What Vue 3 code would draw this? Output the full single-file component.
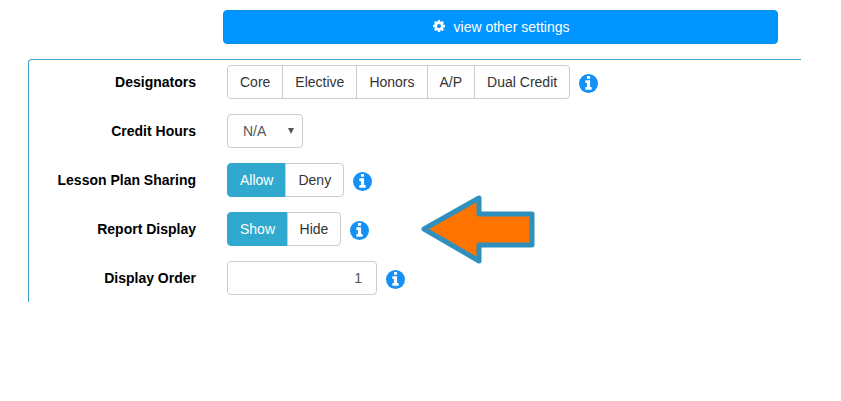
<script setup>
const infoGlyph = 'M1152 1376v-160q0-14-9-23t-23-9h-96v-512q0-14-9-23t-23-9h-320q-14 0-23 9t-9 23v160q0 14 9 23t23 9h96v320h-96q-14 0-23 9t-9 23v160q0 14 9 23t23 9h448q14 0 23-9t9-23zm-128-896v-160q0-14-9-23t-23-9h-192q-14 0-23 9t-9 23v160q0 14 9 23t23 9h192q14 0 23-9t9-23z'
const gearPath = 'M1152 896q0-106-75-181t-181-75-181 75-75 181 75 181 181 75 181-75 75-181zm512-109v222q0 12-8 23t-20 13l-185 28q-19 54-39 91 35 50 107 138 10 12 10 25t-9 23q-27 37-99 108t-94 71q-12 0-26-9l-138-108q-44 23-91 38-16 136-29 186-7 28-36 28h-222q-14 0-24.500-8.500t-11.500-21.500l-28-184q-49-16-90-37l-141 107q-10 9-25 9-14 0-25-11-126-114-165-168-7-10-7-23 0-12 8-23 15-21 51-66.500t54-70.500q-27-50-41-99l-183-27q-13-2-21-12.500t-8-23.500v-222q0-12 8-23t19-13l186-28q14-46 39-92-40-57-107-138-10-12-10-24 0-10 9-23 26-36 98.500-107.500t94.500-71.500q13 0 26 10l138 107q44-23 91-38 16-136 29-186 7-28 36-28h222q14 0 24.500 8.500t11.500 21.500l28 184q49 16 90 37l142-107q9-9 24-9 13 0 25 10 129 119 165 170 7 8 7 22 0 12-8 23-15 21-51 66.500t-54 70.500q26 50 41 98l183 28q13 2 21 12.500t8 23.500z'

const designators = ['Core', 'Elective', 'Honors', 'A/P', 'Dual Credit']
</script>

<template>
  <div class="page">
    <button class="settings-btn" type="button">
      <svg class="gear" viewBox="0 0 1792 1792"><path :d="gearPath" fill="#fff" /></svg>
      <span>view other settings</span>
    </button>

    <section class="panel">
      <div class="row">
        <label>Designators</label>
        <div class="btn-group">
          <button v-for="item in designators" :key="item" type="button">{{ item }}</button>
        </div>
        <svg class="info" viewBox="128 128 1536 1536">
          <circle cx="896" cy="896" r="768" fill="#1590f5" />
          <path :d="infoGlyph" fill="#fff" />
        </svg>
      </div>

      <div class="row">
        <label>Credit Hours</label>
        <div class="select"><span>N/A</span></div>
      </div>

      <div class="row">
        <label>Lesson Plan Sharing</label>
        <div class="btn-group">
          <button class="active" type="button">Allow</button>
          <button type="button">Deny</button>
        </div>
        <svg class="info" viewBox="128 128 1536 1536">
          <circle cx="896" cy="896" r="768" fill="#1590f5" />
          <path :d="infoGlyph" fill="#fff" />
        </svg>
      </div>

      <div class="row">
        <label>Report Display</label>
        <div class="btn-group">
          <button class="active" type="button">Show</button>
          <button class="slim" type="button">Hide</button>
        </div>
        <svg class="info" viewBox="128 128 1536 1536">
          <circle cx="896" cy="896" r="768" fill="#1590f5" />
          <path :d="infoGlyph" fill="#fff" />
        </svg>
      </div>

      <div class="row">
        <label>Display Order</label>
        <input class="order" type="text" value="1" />
        <svg class="info" viewBox="128 128 1536 1536">
          <circle cx="896" cy="896" r="768" fill="#1590f5" />
          <path :d="infoGlyph" fill="#fff" />
        </svg>
      </div>
    </section>

    <svg class="arrow" viewBox="0 0 120 72" width="120" height="72">
      <path
        d="M4 35 L59 4 V20 H112 V51 H59 V67 Z"
        fill="#ff7300"
        stroke="#2f90bd"
        stroke-width="5"
        stroke-linejoin="round"
      />
    </svg>
  </div>
</template>

<style>
body {
  background: #fff;
}
</style>

<style scoped>
.page {
  position: relative;
  width: 841px;
  height: 401px;
  overflow: hidden;
  padding-top: 10px;
  box-sizing: border-box;
  font-family: "Liberation Sans", Arial, sans-serif;
  font-size: 14px;
}

.settings-btn {
  display: flex;
  align-items: center;
  justify-content: center;
  gap: 8px;
  width: 555px;
  height: 34px;
  margin-left: 223px;
  border: 1px solid #0a8fe6;
  border-radius: 4px;
  padding: 0;
  color: #fff;
  background: #0095ff;
  font: inherit;
}

.gear {
  width: 14px;
  height: 14px;
  margin-top: -3px;
}

.panel {
  display: grid;
  align-content: start;
  gap: 15px;
  box-sizing: border-box;
  width: 773px;
  height: 243px;
  margin: 15px 0 0 28px;
  border-top: 1px solid #3b9dc9;
  border-left: 1px solid #3b9dc9;
  border-top-left-radius: 4px;
  padding-top: 5px;
}

.row {
  display: flex;
  align-items: center;
  height: 34px;
}

label {
  flex: none;
  width: 167px;
  margin-right: 31px;
  color: #000;
  text-align: right;
  font-weight: 700;
}

.btn-group {
  display: flex;
  height: 34px;
}

.btn-group button {
  margin-left: -1px;
  border: 1px solid #ccc;
  padding: 0 12px;
  color: #333;
  background: #fff;
  font: inherit;
}

.btn-group button.slim {
  padding: 0 11.5px;
}

.btn-group button:first-child {
  margin-left: 0;
  border-radius: 4px 0 0 4px;
}

.btn-group button:last-child {
  border-radius: 0 4px 4px 0;
}

.btn-group button.active {
  border-color: #31a9ce;
  color: #fff;
  background: #31a9ce;
}

.select {
  position: relative;
  box-sizing: border-box;
  width: 76px;
  height: 34px;
  border: 1px solid #ccc;
  border-radius: 4px;
  padding-left: 15px;
  color: #555;
  line-height: 32px;
}

.select::after {
  content: "";
  position: absolute;
  top: 13px;
  right: 8px;
  border-top: 6px solid #555;
  border-right: 3px solid transparent;
  border-left: 3px solid transparent;
}

.order {
  box-sizing: border-box;
  width: 150px;
  height: 34px;
  border: 1px solid #ccc;
  border-radius: 4px;
  padding: 0 14px;
  color: #555;
  text-align: right;
  font: inherit;
  outline: none;
}

.info {
  flex: none;
  width: 19px;
  height: 19px;
  margin: 3px 0 0 9px;
}

.arrow {
  position: absolute;
  top: 194px;
  left: 420px;
}
</style>
